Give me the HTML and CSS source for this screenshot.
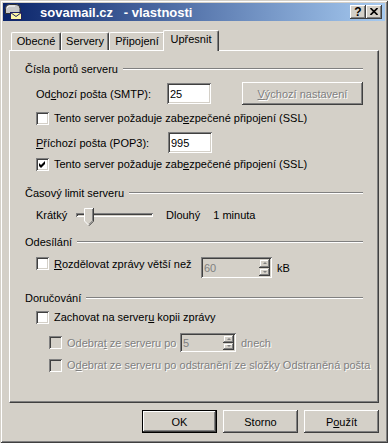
FILE: index.html
```html
<!DOCTYPE html>
<html lang="cs">
<head>
  <meta charset="UTF-8">
  <title>sovamail.cz - vlastnosti</title>
  <link rel="stylesheet" href="styles.css">
</head>
<body>
  <div class="window">
    <div class="titlebar">
      <svg class="app-icon" width="17" height="16" viewBox="0 0 17 16">
        <path d="M0.5 4.5 Q0.5 0.5 4.5 0.5 H11 Q15 0.5 15 4.5 V9.5 H0.5 Z" fill="#c8c8c8" stroke="#303030"/>
        <path d="M2 4 Q2 2 4.5 2 H10" fill="none" stroke="#fff"/>
        <rect x="5.5" y="8.5" width="11" height="7" fill="#fff7a8" stroke="#202060"/>
        <path d="M5.5 8.5 L11 12.5 L16.5 8.5" fill="none" stroke="#202060"/>
      </svg>
      <span class="title">sovamail.cz   - vlastnosti</span>
      <div class="caption-buttons">
        <span class="cap-btn help">?</span>
        <span class="cap-btn close">
          <svg width="8" height="7" viewBox="0 0 8 7">
            <path d="M0.5 0 L7.5 7 M7.5 0 L0.5 7" stroke="#000" stroke-width="1.6"/>
          </svg>
        </span>
      </div>
    </div>

    <div class="client">
      <div class="tabs">
        <span class="tab">Obecné</span>
        <span class="tab">Servery</span>
        <span class="tab">Připojení</span>
        <span class="tab active">Upřesnit</span>
      </div>

      <div class="panel">
        <div class="group-title g1">Čísla portů serveru</div>
        <div class="group">
          <div class="row r-smtp">
            <span class="field-label">Od<u>c</u>hozí pošta (SMTP):</span>
            <input class="edit" type="text" value="25">
            <button class="btn wide-btn" disabled><u>V</u>ýchozí nastavení</button>
          </div>
          <div class="row check-row r-ssl1">
            <span class="check"></span>
            <span>Tento server požaduje zab<u>e</u>zpečené připojení (SSL)</span>
          </div>
          <div class="row r-pop">
            <span class="field-label"><u>P</u>říchozí pošta (POP3):</span>
            <input class="edit" type="text" value="995">
          </div>
          <div class="row check-row r-ssl2">
            <span class="check checked">
              <svg width="13" height="13" viewBox="0 0 13 13"><polygon points="3,5 5,7 9,3 9,6 5,10 3,8" fill="#000"/></svg>
            </span>
            <span>Tento server požaduje zab<u>e</u>zpečené připojení (SSL)</span>
          </div>
        </div>

        <div class="group-title g2">Časový limit serveru</div>
        <div class="group">
          <div class="row r-slider">
            <span class="slider-label">Krátký</span>
            <div class="slider">
              <span class="track"></span>
              <svg class="thumb" width="10" height="18" viewBox="0 0 10 18">
                <polygon points="0,0 10,0 10,13 5,18 0,13" fill="#d4d0c8"/>
                <polyline points="0.5,13 0.5,0.5 9,0.5" fill="none" stroke="#fff"/>
                <polyline points="9.5,0 9.5,13.2 5,17.7" fill="none" stroke="#404040"/>
                <polyline points="8.5,1 8.5,12.8 5,16.3" fill="none" stroke="#808080"/>
                <polyline points="0.5,13 4.5,17" fill="none" stroke="#fff"/>
              </svg>
            </div>
            <span class="slider-end">Dlouhý</span>
            <span class="slider-value">1 minuta</span>
          </div>
        </div>

        <div class="group-title g3">Odesílání</div>
        <div class="group">
          <div class="row r-split">
            <span class="check"></span>
            <span class="split-label"><u>R</u>ozdělovat zprávy větší než</span>
            <div class="spin spin-kb">
              <input type="text" value="60" disabled>
              <span class="spin-btns"><span class="up"></span><span class="down"></span></span>
            </div>
            <span class="unit">kB</span>
          </div>
        </div>

        <div class="group-title g4">Doručování</div>
        <div class="group">
          <div class="row check-row r-keep">
            <span class="check"></span>
            <span>Zachovat na server<u>u</u> kopii zprávy</span>
          </div>
          <div class="sub">
            <div class="row r-remove disabled">
              <span class="check"></span>
              <span class="remove-label">Odebra<u>t</u> ze serveru po</span>
              <div class="spin spin-days">
                <input type="text" value="5" disabled>
                <span class="spin-btns"><span class="up"></span><span class="down"></span></span>
              </div>
              <span class="unit">dnech</span>
            </div>
            <div class="row check-row r-remove2 disabled">
              <span class="check"></span>
              <span>O<u>d</u>ebrat ze serveru po odstranění ze složky Odstraněná pošta</span>
            </div>
          </div>
        </div>
      </div>

      <div class="actions">
        <button class="btn default">OK</button>
        <button class="btn">Storno</button>
        <button class="btn">P<u>o</u>užít</button>
      </div>
    </div>
  </div>
</body>
</html>
```

FILE: styles.css
```css
* { margin: 0; padding: 0; box-sizing: border-box; }

body {
  font-family: "Liberation Sans", Arial, sans-serif;
  font-size: 11px;
  color: #000;
  background: #d4d0c8;
}

u { text-decoration: underline; text-underline-offset: 1px; }

.window {
  width: 388px;
  height: 443px;
  padding: 3px;
  background: #d4d0c8;
  box-shadow: inset 1px 1px #d4d0c8, inset -1px -1px #404040,
              inset 2px 2px #fff, inset -2px -2px #808080;
}

/* title bar */
.titlebar {
  display: flex;
  align-items: center;
  height: 18px;
  padding: 0 3px 0 2px;
  background: linear-gradient(to right, #0a246a, #a6caf0);
}
.app-icon { flex: none; }
.title {
  margin-left: 18px;
  color: #fff;
  font-weight: bold;
  font-size: 13px;
  white-space: pre;
}
.caption-buttons { display: flex; margin-left: auto; }
.cap-btn {
  display: flex;
  align-items: center;
  justify-content: center;
  width: 16px;
  height: 14px;
  background: #d4d0c8;
  box-shadow: inset -1px -1px #404040, inset 1px 1px #fff,
              inset -2px -2px #808080, inset 2px 2px #d4d0c8;
}
.help { font-weight: bold; font-size: 12px; line-height: 14px; padding-bottom: 1px; }
.close svg { margin-top: -1px; }

/* tabs */
.client { padding: 0 6px; }
.tabs {
  display: flex;
  align-items: flex-end;
  height: 20px;
  margin-top: 9px;
  padding-left: 2px;
}
.tab {
  height: 18px;
  line-height: 16px;
  text-align: center;
  background: #d4d0c8;
  border-top: 1px solid #fff;
  border-left: 1px solid #fff;
  border-right: 1px solid #404040;
  border-radius: 2px 2px 0 0;
  box-shadow: inset -1px 0 #808080;
}
.tab:nth-child(1) { width: 50px; }
.tab:nth-child(2) { width: 48px; }
.tab:nth-child(3) { width: 56px; }
.tab.active {
  position: relative;
  z-index: 1;
  width: 56px;
  height: 21px;
  line-height: 16px;
  margin: 0 -2px -1px;
}

.panel {
  height: 353px;
  padding: 0 15px;
  border: 1px solid;
  border-color: #fff #404040 #404040 #fff;
  box-shadow: inset -1px -1px #808080;
}

/* groups */
.group-title {
  display: flex;
  align-items: center;
  height: 14px;
  line-height: 14px;
}
.group-title::after {
  content: "";
  flex: 1;
  margin-left: 5px;
  border-top: 1px solid #808080;
  border-bottom: 1px solid #fff;
}
.g1 { margin-top: 11px; }
.g2 { margin-top: 15px; }
.g3 { margin-top: 10px; }
.g4 { margin-top: 13px; }

.group { padding-left: 11px; }
.sub { padding-left: 13px; }

.row { display: flex; align-items: center; white-space: nowrap; }
.check-row { height: 13px; line-height: 13px; gap: 5px; }

.r-smtp { height: 23px; margin-top: 6px; }
.r-ssl1 { margin-top: 7px; }
.r-pop { height: 23px; margin-top: 6px; }
.r-ssl2 { margin-top: 4px; }
.r-slider { height: 20px; margin-top: 5px; }
.r-split { height: 21px; margin-top: 8px; align-items: flex-start; }
.r-keep { margin-top: 6px; }
.r-remove { height: 19px; margin-top: 9px; }
.r-remove2 { margin-top: 7px; }

.field-label { width: 132px; }

.edit {
  width: 44px;
  height: 21px;
  padding: 0 3px;
  border: 0;
  outline: none;
  font: inherit;
  background: #fff;
  box-shadow: inset 1px 1px #808080, inset -1px -1px #fff,
              inset 2px 2px #404040, inset -2px -2px #d4d0c8;
}

/* checkboxes */
.check {
  flex: none;
  width: 13px;
  height: 13px;
  background: #fff;
  box-shadow: inset 1px 1px #808080, inset -1px -1px #fff,
              inset 2px 2px #404040, inset -2px -2px #d4d0c8;
}
.check svg { display: block; }

.disabled { color: #808080; text-shadow: 1px 1px 0 #fff; }
.disabled .check { background: #d4d0c8; }

/* buttons */
.btn {
  width: 75px;
  height: 23px;
  border: 0;
  font: inherit;
  color: #000;
  background: #d4d0c8;
  box-shadow: inset -1px -1px #404040, inset 1px 1px #fff,
              inset -2px -2px #808080, inset 2px 2px #d4d0c8;
}
.btn:disabled { color: #808080; text-shadow: 1px 1px 0 #fff; }
.btn.default {
  box-shadow: inset 0 0 0 1px #000, inset -2px -2px #404040,
              inset 2px 2px #fff, inset -3px -3px #808080;
}
.wide-btn { width: 122px; margin-left: 31px; }

.actions {
  display: flex;
  justify-content: flex-end;
  gap: 6px;
  margin-top: 7px;
}

/* slider */
.slider-label { width: 40px; }
.slider { position: relative; width: 77px; height: 20px; }
.track {
  position: absolute;
  left: 0;
  right: 0;
  top: 8px;
  height: 4px;
  box-shadow: inset 1px 1px #808080, inset -1px -1px #fff,
              inset 2px 2px #404040, inset -2px -2px #d4d0c8;
}
.thumb { position: absolute; left: 8px; top: 3px; }
.slider-end { margin-left: 13px; }
.slider-value { margin-left: 13px; }

/* spin boxes */
.split-label { width: 147px; margin-left: 5px; line-height: 15px; }
.remove-label { width: 113px; margin-left: 5px; }

.spin {
  display: flex;
  padding: 2px;
  background: #d4d0c8;
  box-shadow: inset 1px 1px #808080, inset -1px -1px #fff,
              inset 2px 2px #404040, inset -2px -2px #d4d0c8;
}
.spin-kb { width: 71px; height: 21px; }
.spin-days { width: 56px; height: 19px; }
.spin input {
  flex: 1;
  min-width: 0;
  border: 0;
  outline: none;
  padding-left: 1px;
  font: inherit;
  color: #808080;
  background: transparent;
  text-shadow: none;
}
.spin-btns { display: flex; flex-direction: column; width: 11px; }
.spin-btns span {
  flex: 1;
  display: flex;
  align-items: center;
  justify-content: center;
  background: #d4d0c8;
  box-shadow: inset -1px -1px #404040, inset 1px 1px #d4d0c8,
              inset -2px -2px #808080, inset 2px 2px #fff;
}
.spin-btns span::after {
  content: "";
  border-left: 2px solid transparent;
  border-right: 2px solid transparent;
}
.spin-btns .up::after { border-bottom: 2px solid #808080; }
.spin-btns .down::after { border-top: 2px solid #808080; }

.unit { margin-left: 5px; }
.r-split .unit { align-self: center; }
```
